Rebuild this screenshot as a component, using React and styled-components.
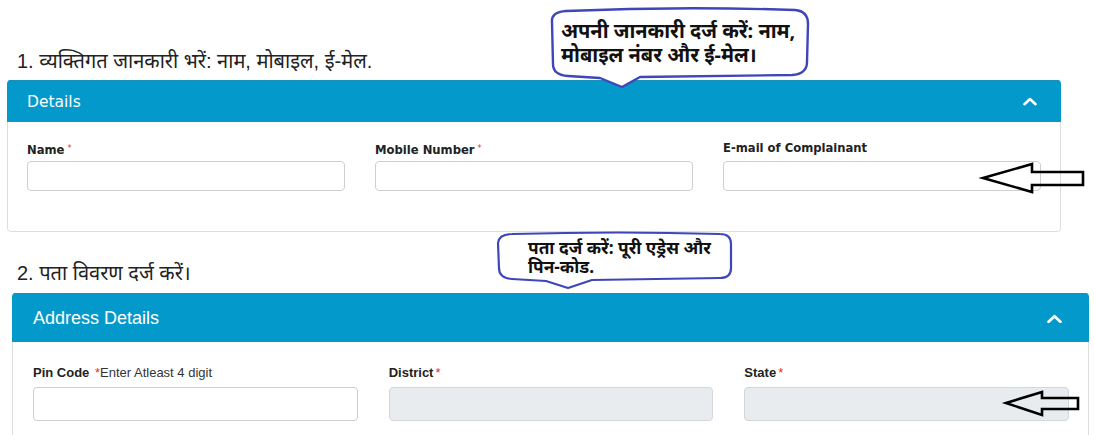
import React from "react";
import styled, { createGlobalStyle, css } from "styled-components";

const GlobalStyle = createGlobalStyle`
  html, body { margin: 0; padding: 0; background: #ffffff; }
  body { font-family: "Liberation Sans", Arial, sans-serif; color: #333; }
  * { box-sizing: border-box; }
`;

const Page = styled.div`
  position: relative;
  width: 1094px;
  height: 435px;
  overflow: hidden;
  padding-top: 49px;
`;

const Heading = styled.h2`
  margin: ${(p) => (p.$second ? "29px 0 8px 0" : "0 0 7px 0")};
  padding-left: 17px;
  font-family: "Liberation Sans", "Noto Sans", "Noto Sans Devanagari", sans-serif;
  font-weight: 400;
  font-size: 20px;
  line-height: 24px;
  height: 24px;
  color: #222;
`;

const Panel = styled.section`
  margin-left: ${(p) => (p.$large ? "12px" : "7px")};
  width: ${(p) => (p.$large ? "1077px" : "1054px")};
  border-radius: 4px;
  overflow: hidden;
`;

const PanelHeader = styled.div`
  display: flex;
  align-items: center;
  justify-content: space-between;
  background: #0399cb;
  border-top: 1px solid #1a8fb8;
  color: #ffffff;
  ${(p) =>
    p.$large
      ? css`
          height: 49px;
          padding: 0 27px 0 21px;
          font-family: "Liberation Sans", Arial, sans-serif;
          font-size: 18px;
        `
      : css`
          height: 42px;
          padding: 0 24px 0 20px;
          font-family: "DejaVu Sans", Verdana, sans-serif;
          font-size: 15.5px;
        `}
`;

const PanelBody = styled.div`
  border: 1px solid #dddddd;
  border-top: none;
  border-radius: 0 0 4px 4px;
  background: #fff;
  display: grid;
  grid-template-columns: repeat(3, 1fr);
  ${(p) =>
    p.$large
      ? css`
          padding: 21px 19px 40px 20px;
          column-gap: 31px;
        `
      : css`
          padding: 18px 19px 40px 19px;
          column-gap: 30px;
        `}
`;

const Field = styled.div`
  display: flex;
  flex-direction: column;
`;

const Label = styled.label`
  font-weight: 700;
  color: #222;
  white-space: nowrap;
  ${(p) =>
    p.$large
      ? css`
          font-family: "Liberation Sans", Arial, sans-serif;
          font-size: 13px;
          line-height: 20px;
          height: 20px;
          margin-bottom: 4px;
        `
      : css`
          font-family: "DejaVu Sans", Verdana, sans-serif;
          font-size: 11.6px;
          line-height: 17px;
          height: 17px;
          margin-bottom: 4px;
        `}
`;

const Req = styled.span`
  color: #e0302a;
  font-weight: 400;
  ${(p) =>
    p.$tiny
      ? css`
          font-size: 8px;
          vertical-align: 3px;
          margin-left: 3px;
        `
      : css`
          font-size: 13px;
          margin-left: 2px;
        `}
`;

const Hint = styled.span`
  font-weight: 400;
  font-size: 13px;
  color: #333;
`;

const Input = styled.input`
  display: block;
  width: 100%;
  height: ${(p) => (p.$large ? "34px" : "30px")};
  border: 1px solid ${(p) => (p.disabled ? "#d3d6da" : "#cfcfcf")};
  border-radius: 4px;
  background: ${(p) => (p.disabled ? "#e9ecef" : "#ffffff")};
  outline: none;
`;

const Chevron = ({ size }) => (
  <svg width={size} height={size * 0.6} viewBox="0 0 14 8" aria-hidden="true">
    <polyline points="1.5,7 7,1.8 12.5,7" fill="none" stroke="#fff" strokeWidth="2.6" strokeLinecap="round" strokeLinejoin="round" />
  </svg>
);

const Bubble = styled.div`
  position: absolute;
  left: ${(p) => p.$x}px;
  top: ${(p) => p.$y}px;
  width: ${(p) => p.$w}px;
  height: ${(p) => p.$h}px;
`;

const BubbleShape = styled.svg`
  position: absolute;
  inset: 0;
  overflow: visible;
`;

const BubbleText = styled.div`
  position: relative;
  font-family: "Noto Sans", "Noto Sans Devanagari", "Liberation Sans", sans-serif;
  font-weight: 700;
  color: #111;
  white-space: nowrap;
  ${(p) =>
    p.$large
      ? css`
          padding: 16px 0 0 16px;
          font-size: 20px;
          line-height: 24px;
        `
      : css`
          padding: 9px 0 0 34px;
          font-size: 17.3px;
          line-height: 19px;
        `}
`;

const ArrowMark = styled.svg`
  position: absolute;
  left: 0;
  top: 0;
  pointer-events: none;
`;

const fieldsA = [
  { label: "Name", req: true },
  { label: "Mobile Number", req: true },
  { label: "E-mail of Complainant", req: false },
];

export default function App() {
  return (
    <Page>
      <GlobalStyle />
      <Heading>1. व्यक्तिगत जानकारी भरें: नाम, मोबाइल, ई-मेल.</Heading>
      <Panel>
        <PanelHeader>
          <span>Details</span>
          <Chevron size={14} />
        </PanelHeader>
        <PanelBody>
          {fieldsA.map((f) => (
            <Field key={f.label}>
              <Label>
                {f.label}
                {f.req && <Req $tiny>*</Req>}
              </Label>
              <Input />
            </Field>
          ))}
        </PanelBody>
      </Panel>

      <Heading $second>2. पता विवरण दर्ज करें।</Heading>
      <Panel $large>
        <PanelHeader $large>
          <span>Address Details</span>
          <Chevron size={15} />
        </PanelHeader>
        <PanelBody $large>
          <Field>
            <Label $large>
              Pin Code <Req>*</Req>
              <Hint>Enter Atleast 4 digit</Hint>
            </Label>
            <Input $large />
          </Field>
          <Field>
            <Label $large>
              District<Req>*</Req>
            </Label>
            <Input $large disabled />
          </Field>
          <Field>
            <Label $large>
              State<Req>*</Req>
            </Label>
            <Input $large disabled />
          </Field>
        </PanelBody>
      </Panel>

      <Bubble $x={545} $y={3} $w={268} $h={88}>
        <BubbleShape width="268" height="88" viewBox="0 0 268 88">
          <path
            d="M 7 19 Q 6 9 21 8 Q 135 3 250 7 Q 263 8 263 21 L 262 59 Q 262 71 247 72 L 95 74 L 77 84 L 55 75 L 23 73 Q 8 72 8 61 Z"
            fill="#ffffff"
            stroke="#3f47b8"
            strokeWidth="2.4"
            strokeLinejoin="round"
          />
        </BubbleShape>
        <BubbleText $large>
          अपनी जानकारी दर्ज करें: नाम,
          <br />
          मोबाइल नंबर और ई-मेल।
        </BubbleText>
      </Bubble>

      <Bubble $x={494} $y={229} $w={242} $h={64}>
        <BubbleShape width="242" height="64" viewBox="0 0 242 64">
          <path
            d="M 4 14 Q 5 5 18 5 Q 126 2 226 5 Q 237 5 237 15 L 237 39 Q 237 49 226 49 L 98 51 L 74 59 L 52 52 L 18 50 Q 5 49 5 39 Z"
            fill="#ffffff"
            stroke="#3f47b8"
            strokeWidth="2.2"
            strokeLinejoin="round"
          />
        </BubbleShape>
        <BubbleText>
          पता दर्ज करें: पूरी एड्रेस और
          <br />
          पिन-कोड.
        </BubbleText>
      </Bubble>

      <ArrowMark width="1094" height="435" viewBox="0 0 1094 435">
        <polygon
          points="983,178 1032,164 1032,172 1083,172 1083,185 1032,185 1032,192"
          fill="none"
          stroke="#000"
          strokeWidth="2.6"
          strokeLinejoin="miter"
        />
        <polygon
          points="1006,403 1042,392 1042,398 1078,398 1078,409 1042,409 1042,415"
          fill="none"
          stroke="#000"
          strokeWidth="2.6"
          strokeLinejoin="miter"
        />
      </ArrowMark>
    </Page>
  );
}
